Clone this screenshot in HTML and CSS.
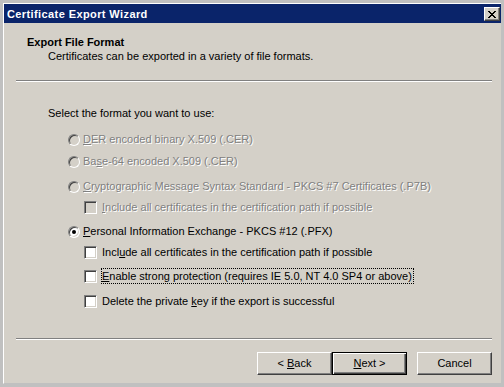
FILE: index.html
```html
<!DOCTYPE html>
<html>
<head>
<meta charset="utf-8">
<link rel="stylesheet" href="styles.css">
</head>
<body>
<div class="window">
  <div class="frame">
    <div class="titlebar">
      <span class="title">Certificate Export Wizard</span>
      <span class="close"><svg width="8" height="7" viewBox="0 0 8 7" shape-rendering="crispEdges"><path fill="#000" d="M0 0h2v1h-2z M6 0h2v1h-2z M1 1h2v1h-2z M5 1h2v1h-2z M2 2h4v1h-4z M3 3h2v1h-2z M2 4h4v1h-4z M1 5h2v1h-2z M5 5h2v1h-2z M0 6h2v1h-2z M6 6h2v1h-2z"/></svg></span>
    </div>
    <div class="header">
      <div class="h-title">Export File Format</div>
      <div class="h-sub">Certificates can be exported in a variety of file formats.</div>
    </div>
    <div class="sep sep-top"></div>
    <div class="body">
      <div class="prompt">Select the format you want to use:</div>
      <div class="row radio-row disabled r1"><span class="radio"></span><span class="label"><u>D</u>ER encoded binary X.509 (.CER)</span></div>
      <div class="row radio-row disabled r2"><span class="radio"></span><span class="label">Ba<u>s</u>e-64 encoded X.509 (.CER)</span></div>
      <div class="row radio-row disabled r3"><span class="radio"></span><span class="label"><u>C</u>ryptographic Message Syntax Standard - PKCS #7 Certificates (.P7B)</span></div>
      <div class="row check-row disabled r4"><span class="check"></span><span class="label"><u>I</u>nclude all certificates in the certification path if possible</span></div>
      <div class="row radio-row r5"><span class="radio checked"></span><span class="label"><u>P</u>ersonal Information Exchange - PKCS #12 (.PFX)</span></div>
      <div class="row check-row r6"><span class="check"></span><span class="label">Incl<u>u</u>de all certificates in the certification path if possible</span></div>
      <div class="row check-row r7"><span class="check"></span><span class="label focus"><u>E</u>nable strong protection (requires IE 5.0, NT 4.0 SP4 or above)</span></div>
      <div class="row check-row r8"><span class="check"></span><span class="label">Delete the private <u>k</u>ey if the export is successful</span></div>
    </div>
    <div class="sep sep-bottom"></div>
    <div class="buttons">
      <span class="btn"><span>&lt; <u>B</u>ack</span></span>
      <span class="btn default"><span><u>N</u>ext &gt;</span></span>
      <span class="btn cancel"><span>Cancel</span></span>
    </div>
  </div>
</div>
</body>
</html>
```

FILE: styles.css
```css
html, body {
  margin: 0;
  padding: 0;
}
body {
  background: #c0c0c0;
  font-family: "Liberation Sans", Arial, sans-serif;
  font-size: 11px;
  line-height: 13px;
  color: #000;
}
u {
  text-decoration: underline;
  text-underline-offset: 1px;
}
.window {
  width: 504px;
  height: 387px;
  box-sizing: border-box;
  border: 3px solid #c0c0c0;
}
.frame {
  height: 100%;
  box-sizing: border-box;
  background: #d4d0c8;
  border-top: 1px solid #fff;
  border-left: 1px solid #fff;
  border-bottom: 1px solid #c0c0c0;
  display: flex;
  flex-direction: column;
}
.titlebar {
  height: 19px;
  flex: none;
  background: #0a246a;
  color: #fff;
  font-weight: bold;
  display: flex;
  align-items: center;
  justify-content: space-between;
  padding-left: 3px;
}
.title {
  padding-top: 1px;
  letter-spacing: 0.4px;
}
.close {
  width: 16px;
  height: 14px;
  box-sizing: border-box;
  margin-right: 1px;
  background: #d4d0c8;
  border: 1px solid;
  border-color: #fff #404040 #404040 #fff;
  box-shadow: inset -1px -1px #808080;
}
.close svg {
  display: block;
  margin: 3px 0 0 3px;
}
.header {
  padding: 13px 0 0 23px;
}
.h-title {
  font-weight: bold;
}
.h-sub {
  margin-top: 1px;
  padding-left: 21px;
}
.sep {
  height: 2px;
  flex: none;
  box-sizing: border-box;
  border-top: 1px solid #808080;
  border-bottom: 1px solid #fff;
  margin: 0 9px 0 12px;
}
.sep-top {
  margin-top: 17px;
}
.body {
  padding-left: 44px;
}
.prompt {
  margin-top: 25px;
}
.row {
  display: flex;
  align-items: center;
  height: 13px;
  white-space: nowrap;
}
.radio-row {
  margin-left: 20px;
}
.check-row {
  margin-left: 36px;
}
.r1 { margin-top: 13px; }
.r2 { margin-top: 9px; }
.r3 { margin-top: 12px; }
.r4 { margin-top: 8px; }
.r5 { margin-top: 11px; }
.r6 { margin-top: 8px; }
.r7 { margin-top: 11px; }
.r8 { margin-top: 12px; }

.radio {
  flex: none;
  width: 12px;
  height: 12px;
  box-sizing: border-box;
  border-radius: 50%;
  border: 1px solid;
  border-color: #808080 #fff #fff #808080;
  background: #fff;
  box-shadow: inset 1px 1px #404040, inset -1px -1px #d4d0c8;
  position: relative;
}
.radio.checked::after {
  content: "";
  position: absolute;
  left: 3px;
  top: 3px;
  width: 4px;
  height: 4px;
  border-radius: 50%;
  background: #000;
}
.radio-row .label {
  margin-left: 3px;
}
.check {
  flex: none;
  width: 13px;
  height: 13px;
  box-sizing: border-box;
  border: 1px solid;
  border-color: #808080 #fff #fff #808080;
  background: #fff;
  box-shadow: inset 1px 1px #404040, inset -1px -1px #d4d0c8;
}
.check-row .label {
  margin-left: 5px;
}
.check-row .label.focus {
  margin: -2px -2px -1px 4px;
  padding: 1px 1px 0 0;
  border: 1px dotted #000;
}
.disabled .radio,
.disabled .check {
  background: #d4d0c8;
}
.disabled .label {
  color: #808080;
  text-shadow: 1px 1px 0 #fff;
}
.sep-bottom {
  margin-top: 30px;
}
.buttons {
  margin-top: 12px;
  padding-right: 9px;
  display: flex;
  justify-content: flex-end;
}
.btn {
  width: 75px;
  height: 23px;
  box-sizing: border-box;
  display: flex;
  align-items: center;
  justify-content: center;
  white-space: pre;
  background: #d4d0c8;
  border: 1px solid;
  border-color: #fff #404040 #404040 #fff;
  box-shadow: inset -1px -1px #808080;
}
.btn.default {
  border: 1px solid #000;
  box-shadow: inset 1px 1px #fff, inset -1px -1px #404040, inset -2px -2px #808080;
}
.btn.cancel {
  margin-left: 10px;
}
```
